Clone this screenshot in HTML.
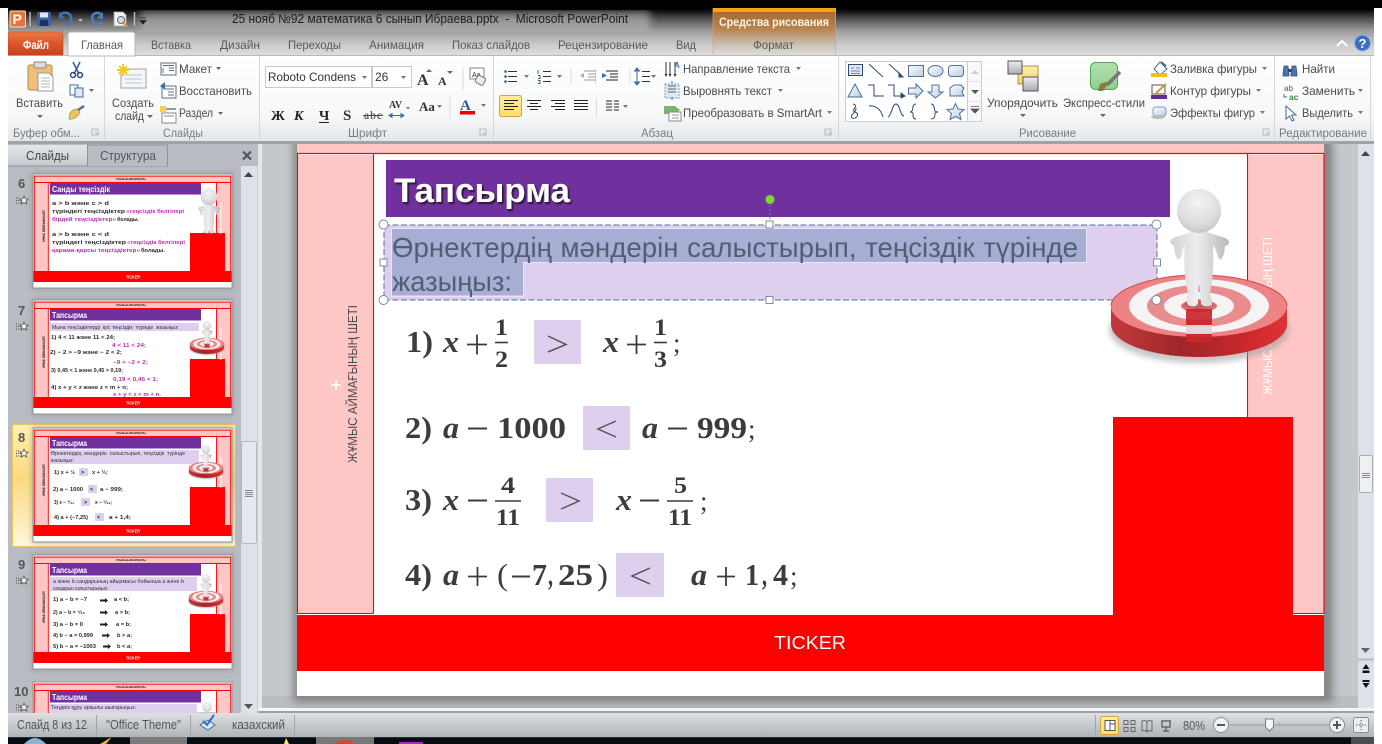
<!DOCTYPE html>
<html lang="kk"><head><meta charset="utf-8"><title>Microsoft PowerPoint</title>
<style>
html,body{margin:0;padding:0;background:#fff;width:1382px;height:744px;overflow:hidden}
svg{position:absolute;left:0;top:0;display:block}
text{font-family:"Liberation Sans","Noto Sans CJK SC",sans-serif;white-space:pre}
.r{font-size:12px;fill:#4a4a4a}
.tab{font-size:12px;fill:#5a5a5a}
.g{font-size:11.5px;fill:#7b7b7b}
.m{font-family:"Liberation Serif",serif;font-weight:bold;font-size:31px;fill:#3c3c3c}
.i{font-style:italic}
.f{font-size:23px;font-family:"Liberation Serif",serif;font-weight:bold;fill:#3a3a3a}
.th{font-size:8px;font-weight:bold;fill:#fff}
.tb{font-size:5.5px;font-weight:bold;fill:#2a2a2a}
.tm{font-size:5.5px;font-weight:bold;fill:#b52fb0}
.st{font-size:12.5px;fill:#555}
.num{font-size:13px;font-weight:bold;fill:#555}
</style></head><body>
<svg width="1382" height="744" viewBox="0 0 1382 744" xmlns="http://www.w3.org/2000/svg">
<defs>
<linearGradient id="tb" gradientUnits="userSpaceOnUse" x1="0" y1="0" x2="0" y2="56"><stop offset="0" stop-color="#000"/><stop offset=".16" stop-color="#000"/><stop offset=".36" stop-color="#5a5a5a"/><stop offset=".55" stop-color="#9c9c9c"/><stop offset=".78" stop-color="#c8c8c8"/><stop offset="1" stop-color="#e0e0e0"/></linearGradient>
<linearGradient id="rb" x1="0" y1="0" x2="0" y2="1"><stop offset="0" stop-color="#fff"/><stop offset=".7" stop-color="#f7f8f9"/><stop offset="1" stop-color="#e3e6ea"/></linearGradient>
<linearGradient id="fl" x1="0" y1="0" x2="0" y2="1"><stop offset="0" stop-color="#ee7a47"/><stop offset=".5" stop-color="#d9562a"/><stop offset="1" stop-color="#c9431c"/></linearGradient>
<linearGradient id="ctx" x1="0" y1="0" x2="0" y2="1"><stop offset="0" stop-color="#a2642c"/><stop offset=".45" stop-color="#b8854f"/><stop offset="1" stop-color="#dcdcdc" stop-opacity=".4"/></linearGradient>
<linearGradient id="sb" x1="0" y1="0" x2="0" y2="1"><stop offset="0" stop-color="#dfe1e4"/><stop offset="1" stop-color="#b0b3b7"/></linearGradient>
<linearGradient id="sel" x1="0" y1="0" x2="0" y2="1"><stop offset="0" stop-color="#fff0b0"/><stop offset=".45" stop-color="#fbd980"/><stop offset="1" stop-color="#fff8dc"/></linearGradient>
<linearGradient id="yb" x1="0" y1="0" x2="0" y2="1"><stop offset="0" stop-color="#ffefa0"/><stop offset="1" stop-color="#ffdc6a"/></linearGradient>
<linearGradient id="tabs" x1="0" y1="0" x2="0" y2="1"><stop offset="0" stop-color="#e4e7ea"/><stop offset="1" stop-color="#c5c9ce"/></linearGradient>
<linearGradient id="blue" x1="0" y1="0" x2="1" y2="1"><stop offset="0" stop-color="#fff"/><stop offset="1" stop-color="#b9cde3"/></linearGradient>
<linearGradient id="sq" x1="0" y1="0" x2="0" y2="1"><stop offset="0" stop-color="#eee"/><stop offset="1" stop-color="#a9adb3"/></linearGradient>
<linearGradient id="yel" x1="0" y1="0" x2="0" y2="1"><stop offset="0" stop-color="#fff0b0"/><stop offset="1" stop-color="#f4cf62"/></linearGradient>
<linearGradient id="grn" x1="0" y1="0" x2="0" y2="1"><stop offset="0" stop-color="#b3e0b0"/><stop offset="1" stop-color="#8ed08e"/></linearGradient>
<radialGradient id="head" cx=".48" cy=".3" r=".8"><stop offset="0" stop-color="#f4f4f4"/><stop offset=".6" stop-color="#dedddd"/><stop offset="1" stop-color="#bdbbbb"/></radialGradient>
<linearGradient id="bodyG" x1="0" y1="0" x2="1" y2="0"><stop offset="0" stop-color="#d2d0d0"/><stop offset=".45" stop-color="#efeeee"/><stop offset="1" stop-color="#b9b7b7"/></linearGradient>
<linearGradient id="side" x1="0" y1="0" x2="1" y2="0"><stop offset="0" stop-color="#c03a3d"/><stop offset=".4" stop-color="#a02629"/><stop offset=".75" stop-color="#c9272a"/><stop offset="1" stop-color="#dd3336"/></linearGradient>
<filter id="bl" x="-20%" y="-30%" width="140%" height="160%"><feGaussianBlur stdDeviation="3"/></filter>
<filter id="sh" x="-5%" y="-5%" width="110%" height="110%"><feGaussianBlur stdDeviation="4"/></filter>
<filter id="ts" x="-10%" y="-10%" width="125%" height="130%"><feDropShadow dx="1.5" dy="1.8" stdDeviation=".8" flood-color="#111" flood-opacity=".85"/></filter>
<clipPath id="work"><rect x="262" y="144" width="1096" height="564"/></clipPath>
<g id="man">
 <ellipse cx="0" cy="-2" rx="15" ry="5" fill="#b05a5c" opacity=".6"/>
 <path d="M-5,-76 C-10,-71 -24,-71 -28,-66 C-30,-63 -27,-61 -25,-60 L-24,-52 -21,-46 -18,-49 -16,-57 -14,-61 C-15,-48 -15,-36 -13,-24 L-11,-12 C-12,-8 -13,-4 -11,-1 -7,1 -2,1 -1,-3 L-1,-12 0,-28 1,-12 2,-3 C3,1 10,1 13,-1 14,-5 12,-8 11,-12 L13,-26 C15,-38 14,-50 14,-61 L17,-56 19,-49 22,-46 25,-52 26,-60 C30,-61 31,-64 29,-66 C24,-71 10,-71 6,-76 Z" fill="url(#bodyG)"/>
 <circle cx="0" cy="-95" r="22" fill="url(#head)"/>
</g>
<g id="tgt">
 <ellipse cx="0" cy="24" rx="90" ry="33" fill="#999" opacity=".55" filter="url(#bl)"/>
 <path d="M-88,0 V18 C-88,38 -45,51 0,51 C45,51 88,38 88,18 V0 Z" fill="url(#side)"/>
 <ellipse cx="0" cy="0" rx="88" ry="31" fill="#ee8386"/>
 <path d="M-88,0 C-88,-17 -45,-31 0,-31 C45,-31 88,-17 88,0" fill="none" stroke="#cc4b4f" stroke-width="1"/>
 <ellipse cx="0" cy="0" rx="70" ry="27" fill="#f4f4f4"/>
 <ellipse cx="0" cy="0" rx="52" ry="21" fill="#e98c8e"/>
 <ellipse cx="0" cy="0" rx="35" ry="14" fill="#f4f4f4"/>
 <ellipse cx="0" cy="0" rx="18" ry="6" fill="#dc6f72"/>
 <path d="M-13,3 H13 V19 H-13Z" fill="#c9252a" opacity=".92"/>
 <path d="M-13,19 H13 V28 H-13Z" fill="#d9d9d9" opacity=".9"/>
 <path d="M-13,28 H13 V36 Q0,37 -13,36Z" fill="#c9252a" opacity=".92"/>
</g>
<g id="frame">
 <rect x="-1" y="-1" width="201" height="116" fill="#777" opacity=".5" filter="url(#bl)"/>
 <rect x="0" y="0" width="199" height="114" fill="#fff" stroke="#8f9296" stroke-width="1"/>
 <rect x="1" y="1" width="197" height="8" fill="#ffc6c6"/>
 <rect x="1" y="9" width="14" height="88" fill="#ffc6c6"/>
 <rect x="183" y="9" width="15" height="88" fill="#ffc6c6"/>
 <path d="M1,2.2H198M1,8.500H198M15.300,8.500V97M183.500,8.500V97M1.300,2V97M197.700,2V97" stroke="#f00" stroke-width=".9" fill="none"/>
 <rect x="17" y="9" width="151" height="11.500" fill="#70309d"/>
 <rect x="157" y="59" width="35" height="38" fill="#f00"/>
 <rect x=".5" y="97" width="198" height="11" fill="#f00"/>
</g>
<g id="star"><path d="M5,0 6.200,2.900 9.200,3.100 6.900,5 7.700,8 5,6.400 2.300,8 3.100,5 .8,3.100 3.800,2.900Z" fill="#fff" stroke="#555" stroke-width=".8"/><path d="M-3,2H1M-3,4.500H2M-3,7H2" stroke="#555" stroke-dasharray="1 1"/></g>
</defs>

<!-- window chrome -->
<rect width="1382" height="744" fill="#fff"/>
<rect x="8" y="0" width="1366" height="58" fill="url(#tb)"/>
<rect x="140" y="11" width="510" height="20" fill="#c4c4c4" opacity=".55" filter="url(#sh)"/>
<rect x="0" y="0" width="1382" height="8" fill="#000"/>
<rect x="8" y="55" width="1366" height="86" fill="url(#rb)"/>
<path d="M8,55.500H68M135,55.500H1374" stroke="#b5b8bc"/>
<rect x="8" y="141" width="1366" height="3" fill="#9fa3a8"/>

<!-- QAT -->
<rect x="10" y="11" width="15.500" height="16" rx="1.500" fill="#e8743a" stroke="#fbe3cf"/>
<text x="12.500" y="24" style="font-size:14px;font-weight:bold;fill:#fff">P</text>
<path d="M30,12V26" stroke="#bbb" stroke-width="1.500"/>
<rect x="37" y="12" width="14" height="14" rx="1" fill="#3f5f9f"/><rect x="40" y="12.500" width="8" height="5" fill="#dfe7f4"/><rect x="40" y="20" width="8" height="6" fill="#1e2e66"/>
<path d="M61,14 C67,11 72,14 71,20 C70.500,23 68,25 66,25" stroke="#3d73bd" stroke-width="2.500" fill="none"/><path d="M59,12 L59,19 65,18Z" fill="#3d73bd"/>
<path d="M78,19h5l-2.500,3z" fill="#bbb"/>
<path d="M101,14 C95,11 91,15 92.500,20 C93.500,24 99,26 102,22" stroke="#4a80c8" stroke-width="2.500" fill="none"/><path d="M103,12 L103,19 97,18Z" fill="#4a80c8"/>
<path d="M114,12H123L126,15V26H114Z" fill="#f1f1f1" stroke="#aaa" stroke-width=".8"/><circle cx="121" cy="20" r="3.500" fill="#cfe0ef" stroke="#666"/><path d="M123.500,23 127,26.500" stroke="#d59b2a" stroke-width="2"/>
<path d="M134.500,12V26" stroke="#bbb" stroke-width="1.500"/>
<path d="M140,18H146M140,20.500H146l-3,3.500z" stroke="#222" fill="#222" stroke-width=".8"/>

<text x="232" y="23" style="font-size:12.500px;fill:#1c1c1c" textLength="396" lengthAdjust="spacingAndGlyphs">25 нояб №92 математика 6 сынып Ибраева.pptx  -  Microsoft PowerPoint</text>

<!-- Context tab -->
<rect x="713" y="8" width="123" height="47" fill="url(#ctx)"/>
<rect x="713" y="8" width="123" height="4" fill="#f7a30d"/>
<path d="M713,8V54M835.500,8V54" stroke="#e0a060" stroke-opacity=".7"/>
<text x="719" y="26" style="font-size:12px;font-weight:bold;fill:#fff5ea" textLength="110" lengthAdjust="spacingAndGlyphs">Средства рисования</text>

<!-- Tabs -->
<path d="M8,55V35Q8,32 11,32H60Q63,32 63,35V55Z" fill="url(#fl)" stroke="#b34a25" stroke-width=".6"/>
<text x="23" y="49" style="font-size:12px;font-weight:bold;fill:#fff" textLength="26" lengthAdjust="spacingAndGlyphs">Файл</text>
<path d="M68,56V35Q68,32 71,32H132Q135,32 135,35V56Z" fill="#fff" stroke="#b5b8bc"/>
<text x="81" y="49" class="tab" textLength="42" lengthAdjust="spacingAndGlyphs">Главная</text>
<text x="151" y="49" class="tab" textLength="40" lengthAdjust="spacingAndGlyphs">Вставка</text>
<text x="220" y="49" class="tab" textLength="40" lengthAdjust="spacingAndGlyphs">Дизайн</text>
<text x="288" y="49" class="tab" textLength="53" lengthAdjust="spacingAndGlyphs">Переходы</text>
<text x="369" y="49" class="tab" textLength="55" lengthAdjust="spacingAndGlyphs">Анимация</text>
<text x="452" y="49" class="tab" textLength="78" lengthAdjust="spacingAndGlyphs">Показ слайдов</text>
<text x="558" y="49" class="tab" textLength="90" lengthAdjust="spacingAndGlyphs">Рецензирование</text>
<text x="676" y="49" class="tab" textLength="20" lengthAdjust="spacingAndGlyphs">Вид</text>
<text x="753" y="49" class="tab" textLength="41" lengthAdjust="spacingAndGlyphs">Формат</text>
<path d="M1337,46 1342,41 1347,46" stroke="#fff" stroke-width="2" fill="none"/>
<circle cx="1362.500" cy="43" r="8" fill="#3d6fc0" stroke="#8fb3e6"/><text x="1358.500" y="48" style="font-size:13px;font-weight:bold;fill:#fff">?</text>

<!-- Ribbon separators -->
<path d="M104.500,56V140M259.500,56V140M493.500,56V140M838.500,56V140M1274.500,56V140M1370.500,56V140" stroke="#d3d6da"/>
<text x="13" y="137" class="g" textLength="67" lengthAdjust="spacingAndGlyphs">Буфер обм...</text>
<text x="163" y="137" class="g" textLength="40" lengthAdjust="spacingAndGlyphs">Слайды</text>
<text x="348" y="137" class="g" textLength="39" lengthAdjust="spacingAndGlyphs">Шрифт</text>
<text x="641" y="137" class="g" textLength="32" lengthAdjust="spacingAndGlyphs">Абзац</text>
<text x="1019" y="137" class="g" textLength="57" lengthAdjust="spacingAndGlyphs">Рисование</text>
<text x="1279" y="137" class="g" textLength="88" lengthAdjust="spacingAndGlyphs">Редактирование</text>
<path d="M92,129h6v6h-6zM95,132l3,3" stroke="#aaa" fill="none" stroke-width=".8"/>
<path d="M480,129h6v6h-6zM483,132l3,3M825,129h6v6h-6zM828,132l3,3M1263,129h6v6h-6zM1266,132l3,3" stroke="#aaa" fill="none" stroke-width=".8"/>

<!-- Clipboard -->
<rect x="28" y="65" width="24" height="25" rx="2" fill="#eec07a" stroke="#b58a4a"/>
<rect x="34" y="62" width="12" height="6" rx="1" fill="#ddd" stroke="#888"/>
<path d="M38,73H49L53,77V91H38Z" fill="#fff" stroke="#999"/><path d="M41,78H50M41,81H50M41,84H50M41,87H50" stroke="#b5b5b5"/>
<text x="16" y="107" class="r" textLength="47" lengthAdjust="spacingAndGlyphs">Вставить</text>
<path d="M37,115h6l-3,3z" fill="#666"/>
<path d="M73,62 79,74M80,62 74,74" stroke="#3b5a8f" stroke-width="1.500"/><circle cx="73" cy="75" r="2.500" fill="none" stroke="#2e4a80" stroke-width="1.500"/><circle cx="80" cy="75" r="2.500" fill="none" stroke="#2e4a80" stroke-width="1.500"/>
<rect x="70" y="85" width="8" height="10" fill="#fff" stroke="#3e6aa8"/><rect x="75" y="88" width="8" height="9" fill="#dfe8f4" stroke="#3e6aa8"/>
<path d="M89,89h5l-2.500,3z" fill="#666"/>
<path d="M70,113 C74,108 78,108 80,112 C78,117 73,120 69,119Z" fill="#e8c660" stroke="#a98a30" stroke-width=".7"/><path d="M78,110 84,106" stroke="#5a6a80" stroke-width="2.500"/>

<!-- Slides -->
<rect x="121" y="69" width="25" height="19" fill="#f5f6f8" stroke="#9aa0a8"/><path d="M125,75H142M125,79H142M125,83H142" stroke="#b9c4d4"/>
<path d="M123,64V76M117,70H129M119,66 127,74M127,66 119,74" stroke="#f2c91e" stroke-width="2"/>
<text x="112" y="107" class="r" textLength="42" lengthAdjust="spacingAndGlyphs">Создать</text>
<text x="115" y="120" class="r" textLength="29" lengthAdjust="spacingAndGlyphs">слайд</text><path d="M147,115h6l-3,3z" fill="#666"/>
<rect x="161" y="63" width="15" height="12" fill="#fff" stroke="#5b6f86"/><path d="M163,65.500H174M163,68V73M169,68H174M169,70.500H174" stroke="#5b6f86"/>
<text x="179" y="73" class="r" textLength="33" lengthAdjust="spacingAndGlyphs">Макет</text><path d="M216,67h5l-2.500,3z" fill="#666"/>
<rect x="162" y="86" width="14" height="12" fill="#fff" stroke="#5b6f86"/><path d="M164,89H174M168,92H174M168,95H174" stroke="#5b6f86"/><path d="M160,86 165,82V90Z" fill="#3672b5"/>
<text x="179" y="95" class="r" textLength="73" lengthAdjust="spacingAndGlyphs">Восстановить</text>
<rect x="160" y="106" width="6" height="6" fill="#f2c91e" opacity=".8"/><rect x="166" y="108" width="10" height="2" fill="#999"/><rect x="162" y="113" width="14" height="10" fill="#fff" stroke="#888"/><path d="M164,116H174" stroke="#888"/>
<text x="179" y="117" class="r" textLength="34" lengthAdjust="spacingAndGlyphs">Раздел</text><path d="M218,112h5l-2.500,3z" fill="#666"/>

<!-- Font -->
<rect x="265.500" y="66.500" width="106" height="21" fill="#fff" stroke="#c6cad0"/>
<rect x="372.500" y="66.500" width="39" height="21" fill="#fff" stroke="#c6cad0"/>
<text x="268" y="81" style="font-size:12px;fill:#333" textLength="88" lengthAdjust="spacingAndGlyphs">Roboto Condens</text>
<text x="375" y="81" style="font-size:12px;fill:#333">26</text>
<path d="M362,76h5l-2.500,3zM401,76h5l-2.500,3z" fill="#777"/>
<text x="417" y="85" style="font-family:'Liberation Serif',serif;font-size:16px;font-weight:bold;fill:#333">A</text><path d="M426,72h6l-3,-3z" fill="#3c6fb5"/>
<text x="438" y="85" style="font-family:'Liberation Serif',serif;font-size:12px;font-weight:bold;fill:#333">A</text><path d="M447,71h6l-3,3z" fill="#3c6fb5"/>
<path d="M463,67.500V90" stroke="#d8d8d8"/>
<rect x="470" y="68" width="14" height="11" fill="#fff" stroke="#666" stroke-width=".8"/><text x="472" y="77" style="font-size:7px;fill:#333">Aa</text><rect x="476" y="76" width="9" height="8" rx="2" transform="rotate(30 480 80)" fill="#e8ecf0" stroke="#6a7a8a"/>
<text x="271" y="120" style="font-family:'Liberation Serif',serif;font-size:14px;font-weight:bold;fill:#222">Ж</text>
<text x="294" y="120" style="font-family:'Liberation Serif',serif;font-size:14px;font-weight:bold;font-style:italic;fill:#222">К</text>
<text x="319" y="120" style="font-family:'Liberation Serif',serif;font-size:14px;font-weight:bold;fill:#222">Ч</text><path d="M319,122.500H329" stroke="#222"/>
<text x="343" y="120" style="font-family:'Liberation Serif',serif;font-size:15px;font-weight:bold;fill:#333">S</text>
<text x="364" y="119" style="font-family:'Liberation Serif',serif;font-size:11.500px;fill:#333" textLength="18">abc</text><path d="M363,115.500H383" stroke="#444"/>
<text x="389" y="108" style="font-family:'Liberation Serif',serif;font-size:10px;font-weight:bold;fill:#333">AV</text><path d="M389,115.500H404M389,115.500l3,-2v4zM404,115.500l-3,-2v4z" stroke="#3a6db0" fill="#3a6db0" stroke-width="1"/>
<path d="M406,107h4l-2,2.500z" fill="#777"/>
<text x="419" y="111" style="font-family:'Liberation Serif',serif;font-size:13px;font-weight:bold;fill:#333">Aa</text><path d="M437,105h5l-2.500,3z" fill="#777"/>
<path d="M450,97V119" stroke="#d8d8d8"/>
<text x="460" y="110" style="font-family:'Liberation Serif',serif;font-size:15px;font-weight:bold;fill:#2c5aa0">A</text><rect x="460" y="111" width="15" height="3.500" fill="#e00"/><path d="M481,104h5l-2.500,3z" fill="#777"/>

<!-- Paragraph -->
<path d="M508,71.500H517M508,76.500H517M508,81.500H517" stroke="#333"/><circle cx="505.500" cy="71.500" r="1.300" fill="#2c5aa0"/><circle cx="505.500" cy="76.500" r="1.300" fill="#2c5aa0"/><circle cx="505.500" cy="81.500" r="1.300" fill="#2c5aa0"/>
<path d="M524,75h5l-2.500,3zM557,75h5l-2.500,3z" fill="#777"/>
<path d="M543,71.500H551M543,76.500H551M543,81.500H551" stroke="#333"/><path d="M538,70v4M538,75.500h2v3h-2M538,80.500h2v3h-2" stroke="#2c5aa0" fill="none" stroke-width=".9"/>
<path d="M572,68V84M631,68V84M596.500,68V84" stroke="#dcdcdc" transform="translate(-1,0)"/>
<path d="M584,71H596M588,74H596M588,77H596M584,80H596" stroke="#9a9a9a"/><path d="M580,75.500 584,73v5Z" fill="#9ab3d0"/>
<path d="M606,71H618M610,74H618M610,77H618M606,80H618" stroke="#222"/><path d="M602,73 607,75.500 602,78Z" fill="#3a6db0"/>
<path d="M637,70V83M637,68l-2.500,3h5zM637,85l-2.500,-3h5z" stroke="#3a6db0" fill="#3a6db0"/><path d="M642,71.500H650M642,76.500H650M642,81.500H650" stroke="#333"/><path d="M651,75h5l-2.500,3z" fill="#777"/>
<path d="M666,62V76M670,62V76M675,62V76" stroke="#333"/><path d="M664.500,74h3l-1.500,3zM668.500,74h3l-1.500,3zM673.500,74h3l-1.500,3z" fill="#333"/><text x="674" y="68" style="font-size:8px;font-weight:bold;fill:#3a6db0">A</text>
<text x="683" y="73" class="r" textLength="107" lengthAdjust="spacingAndGlyphs">Направление текста</text><path d="M796,67h5l-2.500,3z" fill="#777"/>
<rect x="665" y="84" width="14" height="14" fill="#dde8f5" stroke="#7f9cc0" stroke-dasharray="2 1"/><path d="M668,89H676M668,92H676M668,86H676" stroke="#333" stroke-width=".8"/><path d="M672,97v3M672,83v-2" stroke="#3a6db0"/>
<text x="683" y="95" class="r" textLength="89" lengthAdjust="spacingAndGlyphs">Выровнять текст</text><path d="M778,89h5l-2.500,3z" fill="#777"/>
<path d="M664,106H675L680,110 675,114H664Z" fill="#7fb26a"/><rect x="669" y="112" width="12" height="9" fill="#fff" stroke="#888"/><path d="M672,115H679M672,118H679" stroke="#999"/>
<text x="683" y="117" class="r" textLength="139" lengthAdjust="spacingAndGlyphs">Преобразовать в SmartArt</text><path d="M827,111h5l-2.500,3z" fill="#777"/>
<rect x="499.500" y="95.500" width="22" height="21" rx="2" fill="url(#yb)" stroke="#d3a33e"/>
<path d="M504,100.500H518M504,103.500H514M504,106.500H518M504,109.500H514" stroke="#222"/>
<path d="M527,100.500H541M530,103.500H538M527,106.500H541M530,109.500H538" stroke="#222"/>
<path d="M551,100.500H565M555,103.500H565M551,106.500H565M555,109.500H565" stroke="#222"/>
<path d="M574,100.500H588M574,103.500H588M574,106.500H588M574,109.500H588" stroke="#222"/>
<path d="M596.500,98V118" stroke="#dcdcdc"/>
<path d="M606,101H612M606,104H612M606,107H612M606,110H612M614,101H619M614,104H619M614,107H619M614,110H619" stroke="#222"/><path d="M623,105h5l-2.500,3z" fill="#777"/>

<!-- Shapes gallery -->
<rect x="845.500" y="61.500" width="136" height="60" fill="#fff" stroke="#c9ccd1"/>
<path d="M967.500,62V121M968,81.500H981M968,101.500H981" stroke="#c9ccd1"/>
<rect x="968" y="62" width="13" height="59" fill="#f3f4f6" opacity=".6"/>
<path d="M971,74l4,-4 4,4z" fill="#ccc"/><path d="M971,90h8l-4,4z" fill="#555"/><path d="M971,106.500H979M971,109h8l-4,4z" stroke="#555" fill="#555" stroke-width=".8"/>
<g fill="none" stroke="#2d4a75" stroke-width="1">
<rect x="848.500" y="64.500" width="14" height="11" fill="#dfe8f4"/>
<path d="M851,68H854M856,68H860M851,71H860M851,73.500H860" stroke="#536b90" stroke-width=".8"/>
<path d="M869,64 883,77M889,64 901,75"/><path d="M899,73 903,77 899,77z" fill="#2d4a75"/>
<rect x="908.500" y="65.500" width="15" height="11" fill="url(#blue)" stroke="#4f6f98"/>
<ellipse cx="935.500" cy="71" rx="7.500" ry="5.500" fill="url(#blue)" stroke="#4f6f98"/>
<rect x="948.500" y="65.500" width="15" height="11" rx="3" fill="url(#blue)" stroke="#4f6f98"/>
<path d="M855,84 862,97H848Z" fill="url(#blue)" stroke="#4f6f98"/>
<path d="M868,85H874V96H884"/><path d="M888,85H894V96H902"/><path d="M901,93 905,96 901,98z" fill="#2d4a75"/>
<path d="M908.500,88H916V84L923,91 916,98V94H908.500Z" fill="url(#blue)" stroke="#4f6f98"/>
<path d="M932,85H939V92H943L935.500,98 928,92H932Z" fill="url(#blue)" stroke="#4f6f98"/>
<path d="M950,88 954,85H961L964,88 962,92 964,96H950Z" fill="url(#blue)" stroke="#4f6f98"/>
<path d="M853,104C860,106 850,110 855,112 861,114 855,120 852,118 849,115 857,112 856,108" />
<path d="M869,106C875,105 881,109 883,117"/><path d="M888,117C892,115 892,104 896,104 900,104 900,116 904,116"/>
<path d="M916,104C912,104 913,110 912,111 911,112 910,112 910,112 910,112 913,112 913,114 913,117 913,119 916,119"/>
<path d="M931,104C935,104 934,110 935,111 936,112 938,112 938,112 938,112 935,112 935,114 935,117 934,119 931,119"/>
<path d="M955.500,103.500 958,109 964,109.500 959.500,113.500 961,119.500 955.500,116.500 950,119.500 951.500,113.500 947,109.500 953,109Z" fill="url(#blue)" stroke="#4f6f98"/>
</g>

<!-- Arrange & styles -->
<rect x="1018" y="66" width="20" height="18" fill="url(#yel)" stroke="#b89030"/>
<rect x="1008" y="61" width="14" height="13" fill="url(#sq)" stroke="#555"/>
<rect x="1023" y="77" width="15" height="14" fill="url(#sq)" stroke="#555"/>
<text x="987" y="107" class="r" textLength="71" lengthAdjust="spacingAndGlyphs">Упорядочить</text><path d="M1020,114h6l-3,3z" fill="#666"/>
<rect x="1090.500" y="62.500" width="27" height="27" rx="5" fill="url(#grn)" stroke="#5aa35a"/>
<path d="M1120,72 1107,85" stroke="#777" stroke-width="3.500"/><path d="M1110,81 1103,91 1098,91 1100,84Z" fill="#8a7a40"/>
<text x="1063" y="107" class="r" textLength="82" lengthAdjust="spacingAndGlyphs">Экспресс-стили</text><path d="M1100,114h6l-3,3z" fill="#666"/>
<path d="M1154,69 1160,62 1167,69 1160,75Z" fill="#fff" stroke="#4a6a90"/><path d="M1161,62 1166,66" stroke="#3a6db0" stroke-width="2"/><rect x="1151" y="73" width="16" height="4" fill="#f7b91b"/>
<text x="1170" y="73" class="r" textLength="87" lengthAdjust="spacingAndGlyphs">Заливка фигуры</text><path d="M1262,67h5l-2.500,3z" fill="#777"/>
<rect x="1152" y="85" width="13" height="9" fill="#fff" stroke="#555"/><path d="M1156,93 1166,84" stroke="#c99a30" stroke-width="2"/><rect x="1151" y="95" width="16" height="4" fill="#5e2d8e"/>
<text x="1170" y="95" class="r" textLength="81" lengthAdjust="spacingAndGlyphs">Контур фигуры</text><path d="M1256,89h5l-2.500,3z" fill="#777"/>
<rect x="1153" y="107" width="13" height="9" rx="3" fill="url(#blue)" stroke="#7d9cc0"/><ellipse cx="1158" cy="117" rx="7" ry="2" fill="#bbb"/>
<text x="1170" y="117" class="r" textLength="85" lengthAdjust="spacingAndGlyphs">Эффекты фигур</text><path d="M1260,111h5l-2.500,3z" fill="#777"/>

<!-- Editing -->
<path d="M1284,66h4l1,8v2h-6v-2zM1292,66h4l1,8v2h-6v-2z" fill="#4a76ad" stroke="#2d4a75" stroke-width=".7"/><rect x="1288" y="69" width="4" height="3" fill="#2d4a75"/>
<text x="1302" y="73" class="r" textLength="33" lengthAdjust="spacingAndGlyphs">Найти</text>
<text x="1284" y="91" style="font-size:8px;fill:#555">ab</text><text x="1289" y="100" style="font-size:8.500px;font-weight:bold;fill:#3a8a3a">ac</text><path d="M1284,94v3h3" stroke="#3a6db0" fill="none"/>
<text x="1302" y="95" class="r" textLength="53" lengthAdjust="spacingAndGlyphs">Заменить</text><path d="M1358,89h5l-2.500,3z" fill="#777"/>
<path d="M1286,106V119L1289.500,116 1292,121 1294,120 1291.500,115H1296Z" fill="#fff" stroke="#4a6a90"/>
<text x="1302" y="117" class="r" textLength="51" lengthAdjust="spacingAndGlyphs">Выделить</text><path d="M1358,111h5l-2.500,3z" fill="#777"/>

<!-- Work area -->
<rect x="8" y="144" width="1366" height="569" fill="#c1c4c8"/>
<rect x="8" y="144" width="250" height="569" fill="#b9bcc3"/>
<rect x="258" y="144" width="4" height="569" fill="#e4e6e9"/>
<rect x="262" y="144" width="35" height="569" fill="#c4c7cb"/>
<rect x="241" y="166" width="16.500" height="547" fill="#dde1ea"/>
<rect x="8" y="145" width="79" height="21" fill="url(#tabs)"/>
<path d="M87.500,145V166H8M87,145H167.500V166H87" fill="none" stroke="#8f9398"/>
<rect x="88" y="146" width="79" height="20" fill="#b9bcc3"/>
<text x="26" y="160" style="font-size:12.500px;fill:#444" textLength="43" lengthAdjust="spacingAndGlyphs">Слайды</text>
<text x="100" y="160" style="font-size:12.500px;fill:#555" textLength="56" lengthAdjust="spacingAndGlyphs">Структура</text>
<path d="M243,151.500 251,159.500M251,151.500 243,159.500" stroke="#555" stroke-width="2.200"/>
<path d="M244,177h9l-4.500,-5z" fill="#444"/>
<path d="M244,704h9l-4.500,5z" fill="#555"/>
<rect x="241.500" y="441.500" width="15" height="102" rx="2" fill="#e5e8ee" stroke="#b4b8be"/>
<path d="M245,490.500H253M245,492.500H253M245,494.500H253M245,496.500H253" stroke="#888"/>

<!-- Selected highlight -->
<rect x="12.500" y="424.500" width="223" height="122" rx="2" fill="url(#sel)" stroke="#e8c75a"/>

<!-- Thumbs -->
<text x="18" y="188" class="num">6</text><use href="#star" x="19" y="196"/>
<text x="18" y="315" class="num">7</text><use href="#star" x="19" y="322"/>
<text x="18" y="442" class="num">8</text><use href="#star" x="19" y="449"/>
<text x="18" y="569" class="num">9</text><use href="#star" x="19" y="576"/>
<text x="14" y="696" class="num">10</text><use href="#star" x="19" y="703"/>

<!-- thumb 6 -->
<g transform="translate(33,174)"><use href="#frame"/>
<text x="83" y="6" style="font-size:2.600px;font-weight:bold;fill:#333" textLength="30">ТАҚЫРЫБЫ МЕН МАҚСАТЫ</text>
<text transform="translate(12,68) rotate(-90)" style="font-size:3.600px;font-weight:bold;fill:#222" textLength="32" lengthAdjust="spacingAndGlyphs">ЖҰМЫС АЙМАҒЫНЫҢ ШЕТІ</text>
<text transform="translate(189,60) rotate(-90)" style="font-size:3.200px;fill:#fff" textLength="32">ЖҰМЫС АЙМАҒЫНЫҢ ШЕТІ</text>
<text x="93" y="104.500" style="font-size:4.500px;font-weight:bold;fill:#fff" textLength="14" lengthAdjust="spacingAndGlyphs">TICKER</text>
<text x="19" y="18" class="th" textLength="58" lengthAdjust="spacingAndGlyphs">Санды теңсіздік</text>
<text x="19" y="31" class="tb" textLength="57" lengthAdjust="spacingAndGlyphs">a &gt; b және c &gt; d</text>
<text x="19" y="39" class="tb" textLength="73" lengthAdjust="spacingAndGlyphs">түріндегі теңсіздіктер</text><text x="93" y="39" class="tm" textLength="58" lengthAdjust="spacingAndGlyphs">«теңсіздік белгілері</text>
<text x="19" y="47" class="tm" textLength="64" lengthAdjust="spacingAndGlyphs">бірдей теңсіздіктер»</text><text x="84" y="47" class="tb" textLength="22" lengthAdjust="spacingAndGlyphs">болады.</text>
<text x="19" y="62" class="tb" textLength="57" lengthAdjust="spacingAndGlyphs">a &gt; b және c &lt; d</text>
<text x="19" y="70" class="tb" textLength="74" lengthAdjust="spacingAndGlyphs">түріндегі теңсіздіктер</text><text x="94" y="70" class="tm" textLength="58" lengthAdjust="spacingAndGlyphs">«теңсіздік белгілері</text>
<text x="19" y="78" class="tm" textLength="88" lengthAdjust="spacingAndGlyphs">қарама-қарсы теңсіздіктер»</text><text x="108" y="78" class="tb" textLength="24" lengthAdjust="spacingAndGlyphs">болады.</text>
<g transform="translate(176,59) scale(.38)"><use href="#man"/></g>
</g>

<!-- thumb 7 -->
<g transform="translate(33,300)"><use href="#frame"/>
<text x="83" y="6" style="font-size:2.600px;font-weight:bold;fill:#333" textLength="30">ТАҚЫРЫБЫ МЕН МАҚСАТЫ</text>
<text transform="translate(12,68) rotate(-90)" style="font-size:3.600px;font-weight:bold;fill:#222" textLength="32" lengthAdjust="spacingAndGlyphs">ЖҰМЫС АЙМАҒЫНЫҢ ШЕТІ</text>
<text transform="translate(189,60) rotate(-90)" style="font-size:3.200px;fill:#fff" textLength="32">ЖҰМЫС АЙМАҒЫНЫҢ ШЕТІ</text>
<text x="93" y="104.500" style="font-size:4.500px;font-weight:bold;fill:#fff" textLength="14" lengthAdjust="spacingAndGlyphs">TICKER</text>
<text x="19" y="18" class="th" textLength="35" lengthAdjust="spacingAndGlyphs">Тапсырма</text>
<rect x="17" y="23" width="149" height="8" fill="#decfef"/>
<text x="19" y="29" style="font-size:5.200px;fill:#333" textLength="127" lengthAdjust="spacingAndGlyphs">Мына теңсіздіктерді  қос теңсіздік  түрінде  жазыңыз:</text>
<text x="18" y="39" class="tb" textLength="64" lengthAdjust="spacingAndGlyphs">1) 4 &lt; 11 және 11 &lt; 24;</text>
<text x="79" y="47" class="tm" textLength="34" lengthAdjust="spacingAndGlyphs">4 &lt; 11 &lt; 24;</text>
<text x="17" y="54" class="tb" textLength="72" lengthAdjust="spacingAndGlyphs">2) − 2 &gt; −9 және − 2 &lt; 2;</text>
<text x="80" y="64" class="tm" textLength="35" lengthAdjust="spacingAndGlyphs">−9 &lt; −2 &lt; 2;</text>
<text x="18" y="72" class="tb" textLength="72" lengthAdjust="spacingAndGlyphs">3) 0,45 &lt; 1 және 0,45 &gt; 0,19;</text>
<text x="80" y="81" class="tm" textLength="45" lengthAdjust="spacingAndGlyphs">0,19 &lt; 0,45 &lt; 1;</text>
<text x="18" y="89" class="tb" textLength="77" lengthAdjust="spacingAndGlyphs">4) x + y &lt; z және z &lt; m + n;</text>
<text x="80" y="96" class="tm" textLength="48" lengthAdjust="spacingAndGlyphs">x + y &lt; z &lt; m + n.</text>
<g transform="translate(174,44) scale(.195)"><use href="#tgt"/><use href="#man"/></g>
</g>

<!-- thumb 8 -->
<g transform="translate(33,428)"><use href="#frame"/>
<text x="83" y="6" style="font-size:2.600px;font-weight:bold;fill:#333" textLength="30">ТАҚЫРЫБЫ МЕН МАҚСАТЫ</text>
<text transform="translate(12,68) rotate(-90)" style="font-size:3.600px;font-weight:bold;fill:#222" textLength="32" lengthAdjust="spacingAndGlyphs">ЖҰМЫС АЙМАҒЫНЫҢ ШЕТІ</text>
<text transform="translate(189,60) rotate(-90)" style="font-size:3.200px;fill:#fff" textLength="32">ЖҰМЫС АЙМАҒЫНЫҢ ШЕТІ</text>
<text x="93" y="104.500" style="font-size:4.500px;font-weight:bold;fill:#fff" textLength="14" lengthAdjust="spacingAndGlyphs">TICKER</text>
<text x="19" y="18" class="th" textLength="35" lengthAdjust="spacingAndGlyphs">Тапсырма</text>
<rect x="17" y="22" width="149" height="14" fill="#decfef"/>
<text x="18" y="27" style="font-size:5.200px;fill:#333" textLength="134" lengthAdjust="spacingAndGlyphs">Өрнектердің  мәндерін  салыстырып, теңсіздік  түрінде</text>
<text x="18" y="34" style="font-size:5.200px;fill:#333" textLength="23" lengthAdjust="spacingAndGlyphs">жазыңыз:</text>
<text x="21" y="46" class="tb" textLength="21" lengthAdjust="spacingAndGlyphs">1) x + ½</text><rect x="46" y="40" width="9" height="8" fill="#decfef"/><text x="48" y="46" class="tb">&gt;</text><text x="59" y="46" class="tb" textLength="16" lengthAdjust="spacingAndGlyphs">x + ⅓;</text>
<text x="20" y="63" class="tb" textLength="30" lengthAdjust="spacingAndGlyphs">2) a − 1000</text><rect x="55" y="57" width="9" height="8" fill="#decfef"/><text x="57" y="63" class="tb">&lt;</text><text x="67" y="63" class="tb" textLength="23" lengthAdjust="spacingAndGlyphs">a − 999;</text>
<text x="21" y="76" class="tb" textLength="20" lengthAdjust="spacingAndGlyphs">3) x − ⁴⁄₁₁</text><rect x="48" y="70" width="9" height="8" fill="#decfef"/><text x="51" y="76" class="tb">&gt;</text><text x="62" y="76" class="tb" textLength="17" lengthAdjust="spacingAndGlyphs">x − ⁵⁄₁₁;</text>
<text x="21" y="91" class="tb" textLength="34" lengthAdjust="spacingAndGlyphs">4) a + (−7,25)</text><rect x="62" y="85" width="9" height="8" fill="#decfef"/><text x="64" y="91" class="tb">&lt;</text><text x="76" y="91" class="tb" textLength="22" lengthAdjust="spacingAndGlyphs">a + 1,4;</text>
<g transform="translate(173,40) scale(.195)"><use href="#tgt"/><use href="#man"/></g>
</g>

<!-- thumb 9 -->
<g transform="translate(33,555)"><use href="#frame"/>
<text x="83" y="6" style="font-size:2.600px;font-weight:bold;fill:#333" textLength="30">ТАҚЫРЫБЫ МЕН МАҚСАТЫ</text>
<text transform="translate(12,68) rotate(-90)" style="font-size:3.600px;font-weight:bold;fill:#222" textLength="32" lengthAdjust="spacingAndGlyphs">ЖҰМЫС АЙМАҒЫНЫҢ ШЕТІ</text>
<text transform="translate(189,60) rotate(-90)" style="font-size:3.200px;fill:#fff" textLength="32">ЖҰМЫС АЙМАҒЫНЫҢ ШЕТІ</text>
<text x="93" y="104.500" style="font-size:4.500px;font-weight:bold;fill:#fff" textLength="14" lengthAdjust="spacingAndGlyphs">TICKER</text>
<text x="19" y="18" class="th" textLength="35" lengthAdjust="spacingAndGlyphs">Тапсырма</text>
<rect x="17" y="22" width="147" height="14" fill="#decfef"/>
<text x="20" y="28" style="font-size:5.200px;fill:#333" textLength="131" lengthAdjust="spacingAndGlyphs">a және b сандарының айырмасы бойынша a және b</text>
<text x="20" y="35" style="font-size:5.200px;fill:#333" textLength="55" lengthAdjust="spacingAndGlyphs">сандарын салыстырыңыз:</text>
<text x="20" y="46" class="tb" textLength="34" lengthAdjust="spacingAndGlyphs">1) a − b = −7</text><path d="M67,44.500h5v-1.500l3,2.500 -3,2.500v-1.500h-5z" fill="#222"/><text x="81" y="46" class="tb" textLength="15" lengthAdjust="spacingAndGlyphs">a &lt; b;</text>
<text x="20" y="59" class="tb" textLength="32" lengthAdjust="spacingAndGlyphs">2) a − b = ⁴⁄₁₁</text><path d="M67,56.500h5v-1.500l3,2.500 -3,2.500v-1.500h-5z" fill="#222"/><text x="82" y="59" class="tb" textLength="15" lengthAdjust="spacingAndGlyphs">a &gt; b;</text>
<text x="20" y="71" class="tb" textLength="30" lengthAdjust="spacingAndGlyphs">3) a − b = 0</text><path d="M67,68.500h5v-1.500l3,2.500 -3,2.500v-1.500h-5z" fill="#222"/><text x="83" y="71" class="tb" textLength="15" lengthAdjust="spacingAndGlyphs">a = b;</text>
<text x="20" y="82" class="tb" textLength="40" lengthAdjust="spacingAndGlyphs">4) b − a = 0,999</text><path d="M69,79.500h5v-1.500l3,2.500 -3,2.500v-1.500h-5z" fill="#222"/><text x="84" y="82" class="tb" textLength="15" lengthAdjust="spacingAndGlyphs">b &gt; a;</text>
<text x="20" y="93" class="tb" textLength="43" lengthAdjust="spacingAndGlyphs">5) b − a = −1003</text><path d="M70,90.500h5v-1.500l3,2.500 -3,2.500v-1.500h-5z" fill="#222"/><text x="84" y="93" class="tb" textLength="15" lengthAdjust="spacingAndGlyphs">b &lt; a;</text>
<g transform="translate(173,42) scale(.195)"><use href="#tgt"/><use href="#man"/></g>
</g>

<!-- thumb 10 (cut by status bar) -->
<g transform="translate(33,682)">
<rect x="0" y="0" width="199" height="31" fill="#fff" stroke="#8f9296"/>
<rect x="1" y="1" width="197" height="8" fill="#ffc6c6"/>
<rect x="1" y="9" width="14" height="22" fill="#ffc6c6"/>
<rect x="183" y="9" width="15" height="22" fill="#ffc6c6"/>
<path d="M1,2.2H198M1,8.500H198M15.300,8.500V31M183.500,8.500V31M1.300,2V31M197.700,2V31" stroke="#f00" stroke-width=".9" fill="none"/>
<rect x="17" y="9" width="151" height="11.500" fill="#70309d"/>
<text x="83" y="6" style="font-size:2.600px;font-weight:bold;fill:#333" textLength="30">ТАҚЫРЫБЫ МЕН МАҚСАТЫ</text>
<text x="19" y="18" class="th" textLength="35" lengthAdjust="spacingAndGlyphs">Тапсырма</text>
<rect x="17" y="22" width="147" height="9" fill="#decfef"/>
<text x="18" y="27" style="font-size:5.200px;fill:#333" textLength="85" lengthAdjust="spacingAndGlyphs">Теңдеік құру арқылы шығарыңыз:</text>
<circle cx="174" cy="25" r="5" fill="url(#head)"/>
</g>

<!-- Main scrollbar -->
<rect x="1358" y="144" width="16" height="569" fill="#dde1ea"/>
<rect x="1359.500" y="455.500" width="13" height="37" rx="2" fill="#eef0f4" stroke="#a9adb3"/>
<path d="M1362,473.500H1370M1362,475.500H1370M1362,477.500H1370" stroke="#888"/>
<path d="M1361,156h9l-4.500,-5z" fill="#444"/>
<path d="M1361,648h9l-4.500,5z" fill="#666"/>
<path d="M1358,659.500H1374" stroke="#b8bcc2" stroke-width="2"/>
<path d="M1362,669l3.500,-5 3.500,5zM1362,673h7v-2.500h-7z" fill="#111" transform="translate(.5,0)"/>
<path d="M1362,680h7v2h-7zM1362,683h7l-3.500,5z" fill="#111" transform="translate(.5,0)"/>

<!-- Main area gradient near slide -->
<rect x="1330" y="144" width="28" height="564" fill="#c4c7cb"/>
<rect x="262" y="696" width="1096" height="12" fill="#b9bcc0"/>
<g clip-path="url(#work)"><rect x="293" y="140" width="1040" height="562" fill="#555" opacity=".55" filter="url(#sh)"/></g>

<!-- Slide -->
<rect x="297" y="144" width="1027" height="552" fill="#fff"/>
<rect x="297" y="144" width="1027" height="9" fill="#ffc6c6"/>
<path d="M297,153.500H1324" stroke="#f00" stroke-width="1.300"/>
<rect x="298" y="155" width="75.500" height="458" fill="#ffc6c6"/>
<rect x="1247.500" y="155" width="76" height="458" fill="#ffc6c6"/>
<path d="M297.500,154V613.500M373.500,154V613.500M1247.500,154V613.500M1324,154V613.500M297,613.500H373.500M1247,613.500H1324" stroke="#f00" stroke-width="1.100" fill="none"/>
<text transform="translate(357,463) rotate(-90)" style="font-size:13px;fill:#4d4d4d" textLength="158" lengthAdjust="spacingAndGlyphs">ЖҰМЫС АЙМАҒЫНЫҢ ШЕТІ</text>
<path d="M331,385H341M336,380V390" stroke="#fff" stroke-width="1.600"/>
<text transform="translate(1272,395) rotate(-90)" style="font-size:13px;fill:#fff" textLength="158" lengthAdjust="spacingAndGlyphs">ЖҰМЫС АЙМАҒЫНЫҢ ШЕТІ</text>
<rect x="1113" y="417" width="180" height="198" fill="#f00"/>
<rect x="297" y="615" width="1027" height="56" fill="#f00"/>
<text x="774" y="649" style="font-size:18px;fill:#fff" textLength="72" lengthAdjust="spacingAndGlyphs">TICKER</text>

<!-- Title -->
<rect x="386" y="160" width="784" height="57" fill="#70309d"/>
<text x="394" y="202" filter="url(#ts)" style="font-size:34px;font-weight:bold;fill:#fff" textLength="176" lengthAdjust="spacingAndGlyphs">Тапсырма</text>

<!-- Text box -->
<rect x="384" y="225" width="773" height="75" fill="#decfef"/>
<rect x="391" y="228" width="696" height="35" fill="#eee3f5"/><rect x="391" y="262" width="133" height="35" fill="#eee3f5"/>
<rect x="392" y="229" width="694" height="33" fill="#a6aed4"/>
<rect x="392" y="262" width="131" height="33.500" fill="#a6aed4"/>
<text x="392" y="257" style="font-size:28px;fill:#525e76;word-spacing:1px" textLength="686" lengthAdjust="spacingAndGlyphs">Өрнектердің мәндерін салыстырып, теңсіздік түрінде</text>
<text x="392" y="291" style="font-size:28px;fill:#525e76" textLength="120" lengthAdjust="spacingAndGlyphs">жазыңыз:</text>

<!-- Math -->
<g>
<text class="m" x="406" y="352" textLength="27" lengthAdjust="spacingAndGlyphs">1)</text>
<text class="m i" x="443" y="352" textLength="16" lengthAdjust="spacingAndGlyphs">x</text>
<path d="M467,344.500H487M477,334.500V354.500" stroke="#3c3c3c" stroke-width="1.800"/>
<text class="f" x="495" y="335" textLength="13" lengthAdjust="spacingAndGlyphs">1</text>
<path d="M495,342.500H508" stroke="#3c3c3c" stroke-width="1.600"/>
<text class="f" x="495" y="367" textLength="13" lengthAdjust="spacingAndGlyphs">2</text>
<rect x="534" y="320" width="47" height="44" fill="#decfef"/>
<path d="M548,336 566,344.500 548,352" stroke="#555" stroke-width="1.500" fill="none"/>
<text class="m i" x="603" y="352" textLength="16" lengthAdjust="spacingAndGlyphs">x</text>
<path d="M627,344.500H646M636.500,335V354" stroke="#3c3c3c" stroke-width="1.800"/>
<text class="f" x="654" y="335" textLength="13" lengthAdjust="spacingAndGlyphs">1</text>
<path d="M654,342.500H667" stroke="#3c3c3c" stroke-width="1.600"/>
<text class="f" x="654" y="367" textLength="13" lengthAdjust="spacingAndGlyphs">3</text>
<text x="673" y="352" style="font-family:'Liberation Serif',serif;font-size:27px;fill:#3c3c3c">;</text>

<text class="m" x="405" y="438" textLength="27" lengthAdjust="spacingAndGlyphs">2)</text>
<text class="m i" x="443" y="438" textLength="16" lengthAdjust="spacingAndGlyphs">a</text>
<path d="M468,428.500H487" stroke="#3c3c3c" stroke-width="2"/>
<text class="m" x="497" y="438" textLength="69" lengthAdjust="spacingAndGlyphs">1000</text>
<rect x="583" y="406" width="47" height="44" fill="#decfef"/>
<path d="M616,421 598,429 616,437" stroke="#555" stroke-width="1.500" fill="none"/>
<text class="m i" x="642" y="438" textLength="16" lengthAdjust="spacingAndGlyphs">a</text>
<path d="M668,428.500H687" stroke="#3c3c3c" stroke-width="2"/>
<text class="m" x="697" y="438" textLength="50" lengthAdjust="spacingAndGlyphs">999</text>
<text x="748" y="438" style="font-family:'Liberation Serif',serif;font-size:27px;fill:#3c3c3c">;</text>

<text class="m" x="405" y="510" textLength="27" lengthAdjust="spacingAndGlyphs">3)</text>
<text class="m i" x="443" y="510" textLength="16" lengthAdjust="spacingAndGlyphs">x</text>
<path d="M468,500.500H487" stroke="#3c3c3c" stroke-width="2"/>
<text class="f" x="501" y="493" textLength="14" lengthAdjust="spacingAndGlyphs">4</text>
<path d="M495,501H521" stroke="#3c3c3c" stroke-width="1.600"/>
<text class="f" x="496" y="525" textLength="24" lengthAdjust="spacingAndGlyphs">11</text>
<rect x="546" y="478" width="47" height="44" fill="#decfef"/>
<path d="M561,493 579,501 561,509" stroke="#555" stroke-width="1.500" fill="none"/>
<text class="m i" x="616" y="510" textLength="16" lengthAdjust="spacingAndGlyphs">x</text>
<path d="M640,500.500H659" stroke="#3c3c3c" stroke-width="2"/>
<text class="f" x="674" y="493" textLength="13" lengthAdjust="spacingAndGlyphs">5</text>
<path d="M667,501H693" stroke="#3c3c3c" stroke-width="1.600"/>
<text class="f" x="668" y="525" textLength="24" lengthAdjust="spacingAndGlyphs">11</text>
<text x="700" y="510" style="font-family:'Liberation Serif',serif;font-size:27px;fill:#3c3c3c">;</text>

<text class="m" x="405" y="585" textLength="27" lengthAdjust="spacingAndGlyphs">4)</text>
<text class="m i" x="443" y="585" textLength="16" lengthAdjust="spacingAndGlyphs">a</text>
<path d="M468,576.500H487M477.500,567V586" stroke="#3c3c3c" stroke-width="1.800"/>
<text x="497" y="585" style="font-family:'Liberation Serif',serif;font-size:31px;fill:#3c3c3c" textLength="11" lengthAdjust="spacingAndGlyphs">(</text>
<path d="M512,576.500H530" stroke="#3c3c3c" stroke-width="2"/>
<text class="m" x="532" y="585" textLength="15" lengthAdjust="spacingAndGlyphs">7</text>
<text class="m" x="548" y="585" textLength="5" lengthAdjust="spacingAndGlyphs">,</text>
<text class="m" x="558" y="585" textLength="35" lengthAdjust="spacingAndGlyphs">25</text>
<text x="597" y="585" style="font-family:'Liberation Serif',serif;font-size:31px;fill:#3c3c3c" textLength="11" lengthAdjust="spacingAndGlyphs">)</text>
<rect x="616" y="553" width="48" height="44" fill="#decfef"/>
<path d="M650,568 632,576 650,584" stroke="#555" stroke-width="1.500" fill="none"/>
<text class="m i" x="691" y="585" textLength="16" lengthAdjust="spacingAndGlyphs">a</text>
<path d="M717,576.500H735M726,567V586" stroke="#3c3c3c" stroke-width="1.800"/>
<text class="m" x="745" y="585" textLength="14" lengthAdjust="spacingAndGlyphs">1</text>
<text class="m" x="762" y="585" textLength="5" lengthAdjust="spacingAndGlyphs">,</text>
<text class="m" x="773" y="585" textLength="15" lengthAdjust="spacingAndGlyphs">4</text>
<text x="790" y="585" style="font-family:'Liberation Serif',serif;font-size:27px;fill:#3c3c3c">;</text>
</g>

<!-- Selection frame -->
<rect x="384" y="225" width="773" height="75" fill="none" stroke="#4f7396" stroke-width="1" stroke-dasharray="6 2.500"/>
<path d="M770,205V224" stroke="#5c8a8a" stroke-dasharray="2 2"/>
<circle cx="770" cy="199.500" r="4.500" fill="#7fd82a"/>
<g fill="#fff" stroke="#7b8ca3" stroke-width="1">
<rect x="766" y="221" width="7" height="7"/><rect x="766" y="296.500" width="7" height="7"/>
<rect x="380" y="259" width="7" height="7"/><rect x="1153.500" y="259" width="7" height="7"/>
<circle cx="383.500" cy="224.500" r="4.500"/><circle cx="383.500" cy="300" r="4.500"/><circle cx="1156.500" cy="224.500" r="4.500"/>
</g>

<!-- Figure -->
<g transform="translate(1199,306)"><use href="#tgt"/></g>
<circle cx="1156.500" cy="300" r="4.500" fill="#fff" stroke="#7b8ca3"/>
<g transform="translate(1199,306)"><use href="#man"/></g>

<!-- bottom white line, status -->
<rect x="258" y="708" width="1116" height="3" fill="#f4f5f6"/>
<rect x="258" y="711" width="1116" height="2" fill="#9da1a6"/>
<rect x="8" y="713" width="1366" height="24" fill="url(#sb)"/>
<path d="M96.500,715V735M190.500,715V735M294.500,715V735M1095.500,715V735" stroke="#a2a5aa"/>
<text x="17" y="729" class="st" textLength="70" lengthAdjust="spacingAndGlyphs">Слайд 8 из 12</text>
<text x="106" y="729" class="st" textLength="75" lengthAdjust="spacingAndGlyphs">"Office Theme"</text>
<path d="M200,725 208,730 215,725 208,720Z" fill="#dfe8f6" stroke="#3a6db0"/><path d="M203,721 207,725 214,715" stroke="#3a6db0" stroke-width="2" fill="none"/>
<text x="232" y="729" class="st" textLength="53" lengthAdjust="spacingAndGlyphs">казахский</text>
<rect x="1100.500" y="716.500" width="18" height="18" rx="2" fill="url(#yb)" stroke="#d3a33e"/>
<path d="M1105,720.500H1115V730.500H1105ZM1110,720.500V730.500M1110,724H1115" fill="#fff" stroke="#555"/>
<path d="M1124,720.500h4v4h-4zM1131,720.500h4v4h-4zM1124,727.500h4v4h-4zM1131,727.500h4v4h-4z" fill="none" stroke="#666"/>
<path d="M1142,721Q1146,720 1147,722Q1148,720 1152,721V731Q1148,730 1147,732Q1146,730 1142,731ZM1147,722V732" fill="none" stroke="#666"/>
<path d="M1161,721H1171M1162,721V727H1170V721M1166,727V731M1163,731H1169" fill="none" stroke="#555" stroke-width="1.200"/>
<text x="1183" y="730" class="st" textLength="22" lengthAdjust="spacingAndGlyphs">80%</text>
<path d="M1229,725H1330" stroke="#9fa3a8" stroke-width="1.200"/><path d="M1279,722V728" stroke="#aaa"/>
<circle cx="1221" cy="725" r="7.500" fill="#f1f2f4" stroke="#888e96"/><path d="M1217,725H1225" stroke="#555" stroke-width="2"/>
<circle cx="1337" cy="725" r="7.500" fill="#f1f2f4" stroke="#888e96"/><path d="M1333,725H1341M1337,721V729" stroke="#555" stroke-width="2"/>
<path d="M1265.500,719H1273.500V727L1269.500,731 1265.500,727Z" fill="#f4f5f7" stroke="#7a7f86"/>
<rect x="1353.500" y="717.500" width="15" height="15" rx="2" fill="#eceef0" stroke="#888e96"/><path d="M1361,720V730M1356,725H1366" stroke="#555" stroke-dasharray="1.500 1.500"/>

<!-- Taskbar -->
<rect x="8" y="737" width="1366" height="7" fill="#070c10"/>
<rect x="8" y="737" width="1366" height="1" fill="#2a2f33"/>
<path d="M24,744Q35,732 46,744Z" fill="#8ab4d4"/>
<rect x="130" y="737" width="57" height="7" fill="#7a7c7e"/>
<path d="M100,744L110,738H111L106,744Z" fill="#e8b820"/>
<path d="M284,744 286,738 289,744Z" fill="#ffe866"/>
<rect x="316" y="737" width="58" height="7" fill="#77797b"/>
<path d="M335,744Q345,736 355,744Z" fill="#d9432e"/>
<rect x="399" y="742" width="24" height="2" fill="#a02fc0"/>
<rect x="1351" y="737" width="23" height="7" fill="#4a4d50"/>
<rect x="0" y="8" width="8" height="736" fill="#fff"/>
<rect x="1374" y="8" width="8" height="736" fill="#fff"/>
</svg>
</body></html>
